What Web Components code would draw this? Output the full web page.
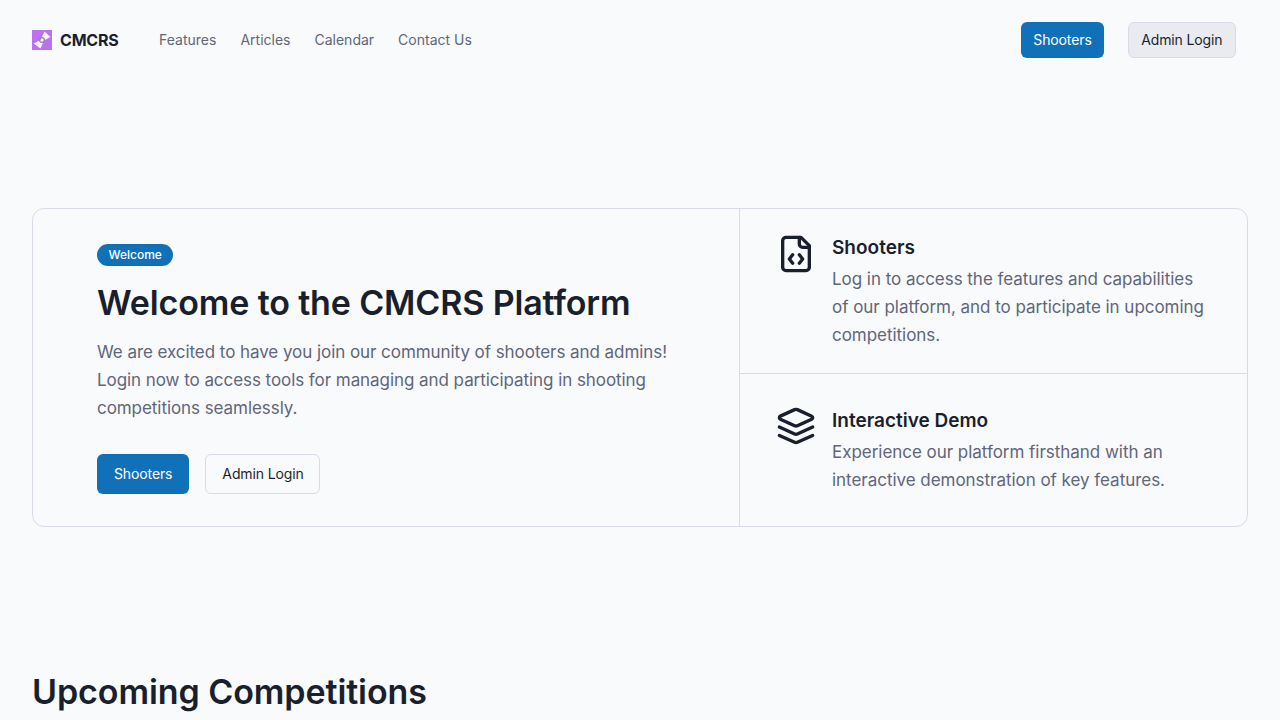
<!DOCTYPE html>
<html lang="en">
<head>
<meta charset="utf-8">
<title>CMCRS</title>
<style>
	html, body { margin: 0; height: 720px; overflow: hidden; }
	body { background: #f9fafc; color: #1a1f2e; font-family: Inter, "Liberation Sans", sans-serif; }
</style>
</head>
<body>
<site-nav></site-nav>
<hero-panel>
	<feature-row title="Shooters">
		<svg slot="icon" viewBox="0 0 24 24" width="40" height="40" fill="none" stroke="currentColor" stroke-width="2" stroke-linecap="round" stroke-linejoin="round">
			<path d="M10 12.5 8 15l2 2.5"/>
			<path d="m14 12.5 2 2.5-2 2.5"/>
			<path d="M14 2v4a2 2 0 0 0 2 2h4"/>
			<path d="M15 2H6a2 2 0 0 0-2 2v16a2 2 0 0 0 2 2h12a2 2 0 0 0 2-2V7z"/>
		</svg>
		Log in to access the features and capabilities of our platform, and to participate in upcoming competitions.
	</feature-row>
	<feature-row title="Interactive Demo">
		<svg slot="icon" viewBox="0 0 24 24" width="40" height="40" fill="none" stroke="currentColor" stroke-width="2" stroke-linecap="round" stroke-linejoin="round">
			<path d="m12.83 2.18a2 2 0 0 0-1.66 0L2.6 6.08a1 1 0 0 0 0 1.83l8.58 3.91a2 2 0 0 0 1.66 0l8.58-3.9a1 1 0 0 0 0-1.83Z"/>
			<path d="m22 17.65-9.17 4.16a2 2 0 0 1-1.66 0L2 17.65"/>
			<path d="m22 12.65-9.17 4.16a2 2 0 0 1-1.66 0L2 12.65"/>
		</svg>
		Experience our platform firsthand with an interactive demonstration of key features.
	</feature-row>
</hero-panel>
<section-title>Upcoming Competitions</section-title>

<script>
(function() {
	class UiButton extends HTMLElement {
		constructor() {
			super();
			let shadow = this.attachShadow({ mode: 'open' });
			shadow.innerHTML = `
				<style>
					:host {
						display: inline-flex;
						align-items: center;
						justify-content: center;
						box-sizing: border-box;
						font-size: 14px;
						font-weight: 400;
						line-height: 20px;
						letter-spacing: -0.12px;
						border-radius: 6px;
						border: 1px solid #d8dbe5;
						color: #1a1f2e;
						height: 40px;
						padding: 0 15.5px 0 16px;
					}
					:host([variant=primary]) {
						background: #1071b9;
						border: 0;
						color: #fff;
						padding: 0 17px;
					}
					:host([variant=muted]) {
						background: #e9ebf0;
					}
					:host([size=sm]) {
						height: 36px;
						padding: 0 12.5px;
					}
					:host([variant=primary][size=sm]) {
						padding: 0 12px;
					}
				</style>
				<slot></slot>
			`;
		}
	}
	customElements.define('ui-button', UiButton);

	class SiteNav extends HTMLElement {
		constructor() {
			super();
			let shadow = this.attachShadow({ mode: 'open' });
			shadow.innerHTML = `
				<style>
					:host {
						display: flex;
						align-items: center;
						height: 80px;
						padding: 0 44px 0 32px;
					}
					.brand {
						display: flex;
						align-items: center;
						gap: 8px;
						font-size: 16px;
						font-weight: 700;
						letter-spacing: -0.2px;
						margin-right: 40.5px;
					}
					.links {
						display: flex;
						gap: 24px;
						font-size: 14px;
						color: #60667a;
						margin-bottom: 1px;
					}
					.actions {
						margin-left: auto;
						display: flex;
						gap: 24px;
					}
					svg { display: block; }
				</style>
				<div class="brand">
					<svg width="20" height="20" viewBox="0 0 20 20">
						<rect width="20" height="20" fill="#bc72f0"/>
						<path d="M12.5 1.5 18.5 7 12 10.5 8.5 18.5 1.5 13.5 8.5 10Z" fill="#f5f0fa"/>
						<circle cx="10" cy="10" r="2.4" fill="none" stroke="#8f8a96" stroke-width="1.2"/>
					</svg>
					<span>CMCRS</span>
				</div>
				<div class="links">
					<span>Features</span>
					<span>Articles</span>
					<span>Calendar</span>
					<span>Contact Us</span>
				</div>
				<div class="actions">
					<ui-button variant="primary" size="sm">Shooters</ui-button>
					<ui-button variant="muted" size="sm">Admin Login</ui-button>
				</div>
			`;
		}
	}
	customElements.define('site-nav', SiteNav);

	class HeroPanel extends HTMLElement {
		constructor() {
			super();
			let shadow = this.attachShadow({ mode: 'open' });
			shadow.innerHTML = `
				<style>
					:host {
						display: grid;
						grid-template-columns: 707px 1fr;
						margin: 128px 32px 0;
						box-sizing: border-box;
						height: 319px;
						border: 1px solid #d8dbe5;
						border-radius: 12px;
					}
					.intro {
						border-right: 1px solid #d8dbe5;
						padding: 35px 64px 0;
					}
					.badge {
						display: inline-block;
						background: #1071b9;
						color: #fff;
						font-size: 12px;
						font-weight: 500;
						line-height: 22px;
						padding: 0 11.5px;
						border-radius: 11px;
						vertical-align: top;
					}
					h1 {
						margin: 15px 0 0;
						font-size: 34px;
						line-height: 44px;
						font-weight: 600;
						letter-spacing: -0.14px;
					}
					p {
						margin: 13px 0 0;
						font-size: 17px;
						line-height: 28px;
						letter-spacing: -0.06px;
						color: #60667a;
					}
					.buttons {
						display: flex;
						gap: 16px;
						margin-top: 32px;
					}
					.side {
						display: flex;
						flex-direction: column;
					}
				</style>
				<div class="intro">
					<span class="badge">Welcome</span>
					<h1>Welcome to the CMCRS Platform</h1>
					<p>We are excited to have you join our community of shooters and admins! Login now to access tools for managing and participating in shooting competitions seamlessly.</p>
					<div class="buttons">
						<ui-button variant="primary">Shooters</ui-button>
						<ui-button>Admin Login</ui-button>
					</div>
				</div>
				<div class="side"><slot></slot></div>
			`;
		}
	}
	customElements.define('hero-panel', HeroPanel);

	class FeatureRow extends HTMLElement {
		constructor() {
			super();
			let shadow = this.attachShadow({ mode: 'open' });
			shadow.innerHTML = `
				<style>
					:host {
						display: flex;
						gap: 16px;
						box-sizing: border-box;
						padding: 33px 36px 0;
						height: 152px;
					}
					:host(:first-child) {
						height: 165px;
						padding-top: 25px;
						border-bottom: 1px solid #d8dbe5;
					}
					.icon { flex: none; width: 40px; height: 40px; margin-top: -1px; }
					:host(:first-child) .icon { margin-top: 0; }
					h3 {
						margin: 0 0 3px;
						font-size: 19px;
						line-height: 28px;
						font-weight: 600;
					}
					.text {
						font-size: 17px;
						line-height: 28px;
						letter-spacing: -0.035px;
						color: #60667a;
					}
				</style>
				<div class="icon"><slot name="icon"></slot></div>
				<div>
					<h3></h3>
					<div class="text"><slot></slot></div>
				</div>
			`;
			shadow.querySelector('h3').textContent = this.getAttribute('title');
		}
	}
	customElements.define('feature-row', FeatureRow);

	class SectionTitle extends HTMLElement {
		constructor() {
			super();
			let shadow = this.attachShadow({ mode: 'open' });
			shadow.innerHTML = `
				<style>
					:host {
						display: block;
						margin: 143px 32px 0;
						font-size: 34px;
						line-height: 44px;
						font-weight: 600;
						letter-spacing: -0.08px;
					}
				</style>
				<slot></slot>
			`;
		}
	}
	customElements.define('section-title', SectionTitle);
})();
</script>
</body>
</html>
